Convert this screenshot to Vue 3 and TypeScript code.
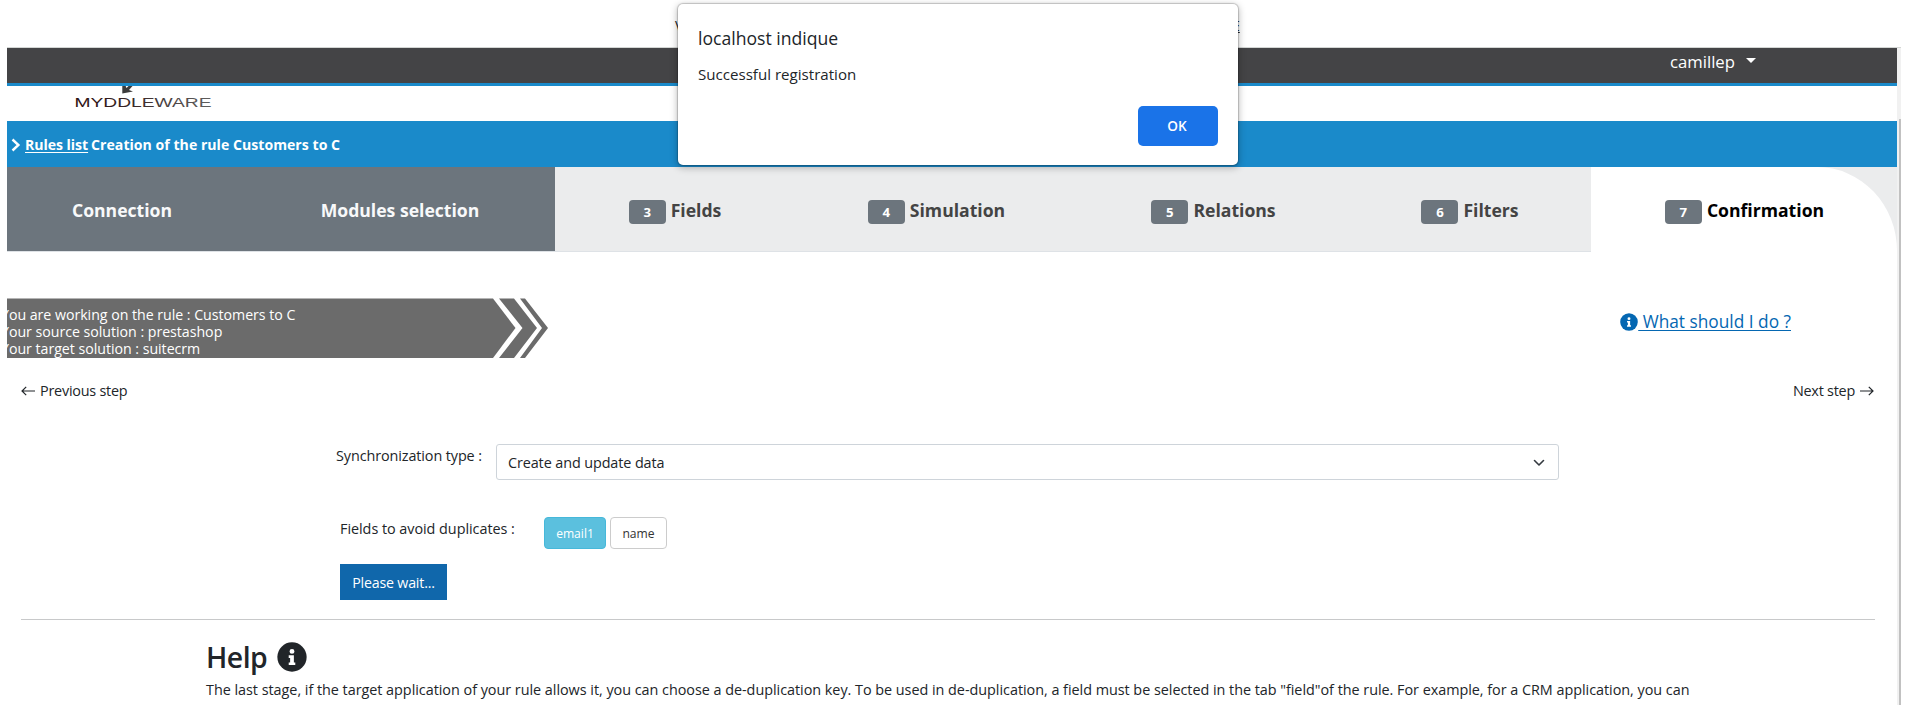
<script setup lang="ts">
import { ref } from 'vue'

interface Step {
  label: string
  state: 'done' | 'todo' | 'active'
  num?: number
}

const steps: Step[] = [
  { label: 'Connection', state: 'done' },
  { label: 'Modules selection', state: 'done' },
  { label: 'Fields', state: 'todo', num: 3 },
  { label: 'Simulation', state: 'todo', num: 4 },
  { label: 'Relations', state: 'todo', num: 5 },
  { label: 'Filters', state: 'todo', num: 6 },
  { label: 'Confirmation', state: 'active', num: 7 },
]

const duplicateFields = ref([
  { name: 'email1', selected: true },
  { name: 'name', selected: false },
])
</script>

<template>
  <div class="page">
    <div class="content">
      <header class="top-space"></header>
      <div class="userbar">
        <span class="user">camillep</span>
        <span class="caret"></span>
      </div>
      <div class="brand">
        <svg class="logo" width="140" height="35" viewBox="0 0 140 35">
          <defs>
            <linearGradient id="ink" x1="0" x2="1" y1="0" y2="0">
              <stop offset="0" stop-color="#2c0f12" />
              <stop offset="0.45" stop-color="#3b2a2a" />
              <stop offset="1" stop-color="#606060" />
            </linearGradient>
          </defs>
          <path d="M48.300 0V7.500L59 5.500L55 4L58.500 0H54.500L52.500 2L51.600 0Z" fill="#3c3c3c" />
          <text x="0.5" y="21.3" font-size="13.2" textLength="137" lengthAdjust="spacingAndGlyphs" fill="url(#ink)">MYDDLEWARE</text>
        </svg>
      </div>
      <nav class="crumbs">
        <svg width="10" height="14" viewBox="0 0 10 14"><path d="M1.500 1.500L7.400 7L1.500 12.500" fill="none" stroke="#fff" stroke-width="2.4" /></svg>
        <a>Rules list</a>
        <span>Creation of the rule Customers to C</span>
      </nav>
      <div class="steps">
        <div v-for="s in steps" :key="s.label" class="step" :class="s.state">
          <span v-if="s.num" class="num">{{ s.num }}</span>
          <span class="label">{{ s.label }}</span>
        </div>
      </div>

      <div class="info">
        <div class="ribbon">
          <svg class="ribbon-bg" width="542" height="60" viewBox="0 0 542 60">
            <g fill="#6b6b6b">
              <path d="M0 .5H486L508.500 30L486 60H0Z" />
              <path d="M492 .5H507L530 30L507 60H492L515.500 30Z" />
              <path d="M513 .5H518L541 30L518 60H513L535 30Z" />
            </g>
          </svg>
          <div class="ribbon-text">
            <div>You are working on the rule : Customers to C</div>
            <div>Your source solution : prestashop</div>
            <div>Your target solution : suitecrm</div>
          </div>
        </div>
        <a class="what">
          <svg width="18" height="18" viewBox="0 0 512 512">
            <circle cx="256" cy="256" r="250" fill="#0467b2" />
            <path fill="#fff" d="M256 118a42 42 0 1 1 0 84 42 42 0 0 1 0-84zM200 228h88v120h24v44H200v-44h24v-76h-24z" />
          </svg><span>&nbsp;What should I do ?</span>
        </a>
      </div>

      <div class="pager">
        <a>
          <svg width="14" height="10" viewBox="0 0 14 10"><path d="M14 5H1M5.200 .8L1 5L5.200 9.200" fill="none" stroke="#212529" stroke-width="1.2" /></svg>
          <span>Previous step</span>
        </a>
        <a>
          <span>Next step</span>
          <svg width="14" height="10" viewBox="0 0 14 10"><path d="M0 5H13M8.800 .8L13 5L8.800 9.200" fill="none" stroke="#212529" stroke-width="1.2" /></svg>
        </a>
      </div>

      <div class="sync">
        <label>Synchronization type :</label>
        <div class="select">
          <span>Create and update data</span>
          <svg width="12" height="8" viewBox="0 0 12 8"><path d="M1.500 1.500L6 6L10.500 1.500" fill="none" stroke="#343a40" stroke-width="1.600" stroke-linecap="round" stroke-linejoin="round" /></svg>
        </div>
      </div>

      <div class="dups">
        <label>Fields to avoid duplicates :</label>
        <button v-for="f in duplicateFields" :key="f.name" class="chip" :class="{ on: f.selected }" @click="f.selected = !f.selected">{{ f.name }}</button>
      </div>
      <button class="wait">Please wait...</button>

      <section class="help">
        <h2>
          <span>Help</span>
          <svg width="30" height="30" viewBox="0 0 512 512">
            <circle cx="256" cy="256" r="250" fill="#212529" />
            <path fill="#fff" d="M256 118a42 42 0 1 1 0 84 42 42 0 0 1 0-84zM200 228h88v120h24v44H200v-44h24v-76h-24z" />
          </svg>
        </h2>
        <p>The last stage, if the target application of your rule allows it, you can choose a de-duplication key. To be used in de-duplication, a field must be selected in the tab "field"of the rule. For example, for a CRM application, you can</p>
      </section>
    </div>

    <div class="scrollbar"><div class="thumb"></div></div>

    <span class="behind left">V</span>
    <span class="behind right">E</span>
    <div class="dialog" role="alertdialog">
      <div class="dialog-title">localhost indique</div>
      <div class="dialog-msg">Successful registration</div>
      <button class="ok">OK</button>
    </div>
  </div>
</template>

<style>
body {
  margin: 0;
  background: #fff;
}
</style>

<style scoped>
* {
  box-sizing: border-box;
}
.page {
  position: relative;
  width: 1905px;
  height: 705px;
  overflow: hidden;
  background: #fff;
  color: #212529;
  font: 14.4px/20px "Open Sans", "Noto Sans", sans-serif;
  white-space: nowrap;
}
button {
  font-family: inherit;
  padding: 0;
}
.content {
  width: 1890px;
  margin-left: 7px;
}
.top-space {
  height: 48px;
  border-bottom: 1px solid #d3d6d4;
}
.userbar {
  display: flex;
  height: 38px;
  padding-left: 1663px;
  background: #444446;
  border-bottom: 3px solid #1a8aca;
  color: #fff;
  font-size: 16.7px;
  line-height: 27px;
}
.caret {
  width: 0;
  height: 0;
  margin: 10px 0 0 11px;
  border: 5px solid transparent;
  border-top-color: #fff;
  border-bottom: 0;
}
.brand {
  height: 35px;
  padding-left: 67px;
}
.logo {
  display: block;
  font-family: "Liberation Sans", Arial, sans-serif;
}
.crumbs {
  display: flex;
  align-items: center;
  height: 46px;
  padding: 2px 0 0 4px;
  background: #1a8aca;
  color: #fff;
  font-size: 14.1px;
  font-weight: 700;
}
.crumbs a {
  margin: 0 3px 0 4px;
  text-decoration: underline;
  text-underline-offset: 2px;
  letter-spacing: -0.05px;
}
.crumbs span {
  letter-spacing: 0.02px;
}
.steps {
  display: grid;
  grid-template-columns: 240px 308px 239px 284px 270px 243px 306px;
  height: 85px;
  background: #ebeced;
}
.step {
  display: flex;
  justify-content: center;
  align-items: center;
  border-bottom: 1px solid #dee2e6;
  color: #444;
  font-size: 17.6px;
  font-weight: 700;
}
.step.done {
  padding-right: 2px;
}
.step:first-child {
  padding-right: 10px;
}
.label {
  padding-top: 2px;
}
.step.done {
  background: #6c757d;
  color: #f8f9fa;
}
.step.active {
  background: #fff;
  border-bottom-color: #fff;
  border-top-right-radius: 80px 84px;
  color: #000;
}
.num {
  width: 37px;
  height: 24px;
  margin: 6px 5px 0 1px;
  border-radius: 4px;
  background: #6c757d;
  color: #fff;
  font-size: 13.2px;
  line-height: 24px;
  text-align: center;
}
.info {
  display: flex;
  justify-content: space-between;
  height: 60px;
  margin-top: 46px;
}
.ribbon {
  position: relative;
  width: 542px;
  height: 60px;
  overflow: hidden;
}
.ribbon-bg {
  display: block;
}
.ribbon-text {
  position: absolute;
  top: 8px;
  left: -6px;
  color: #fff;
  font-size: 14.2px;
  line-height: 17px;
  letter-spacing: -0.03px;
}
.what {
  display: flex;
  height: 24px;
  margin: 12px 106px 0 0;
  color: #0467b2;
  font-size: 17.3px;
  line-height: 23px;
}
.what svg {
  margin: 3px 0 0 -1px;
}
.what span {
  text-decoration: underline;
  text-decoration-thickness: 1px;
  text-underline-offset: 2px;
}
.pager {
  display: flex;
  justify-content: space-between;
  margin: 23px 23px 0 14px;
  letter-spacing: -0.23px;
}
.pager a {
  display: flex;
  align-items: center;
  gap: 5px;
}
.sync {
  display: flex;
  height: 36px;
  margin: 43px 0 0 329px;
}
.sync label {
  width: 160px;
  padding-top: 2px;
  letter-spacing: -0.1px;
}
.select {
  display: flex;
  justify-content: space-between;
  align-items: center;
  width: 1063px;
  padding: 1px 13px 0 11px;
  border: 1px solid #ced4da;
  border-radius: 3px;
  letter-spacing: -0.1px;
}
.dups {
  display: flex;
  gap: 4px;
  height: 32px;
  margin: 37px 0 0 333px;
}
.dups label {
  width: 200px;
  padding-top: 2px;
  letter-spacing: -0.04px;
}
.chip {
  width: 57px;
  height: 32px;
  border: 1px solid #ccc;
  border-radius: 4px;
  background: #fff;
  color: #333;
  font-size: 12.1px;
}
.chip.on {
  width: 62px;
  border-color: #46b8da;
  background: #5bc0de;
  color: #fff;
}
.wait {
  display: block;
  width: 107px;
  height: 36px;
  margin: 15px 0 0 333px;
  border: 0;
  background: #1067ab;
  color: #fff;
  font-size: 14.2px;
  letter-spacing: -0.18px;
}
.help {
  margin: 19px 22px 0 14px;
  padding-left: 185px;
  border-top: 1px solid #c8c9ca;
}
h2 {
  display: flex;
  align-items: center;
  gap: 10px;
  height: 36px;
  margin: 19px 0 0;
  font-size: 28.4px;
  font-weight: 600;
  letter-spacing: -0.5px;
  line-height: 36px;
}
p {
  margin: 5px 0 0;
  letter-spacing: -0.03px;
}
.scrollbar {
  position: absolute;
  top: 47px;
  left: 1897px;
  width: 4px;
  height: 658px;
  padding: 71px 0 0 2px;
  border-top: 1px solid #d3d6d4;
  background: #f1f1f1;
}
.thumb {
  height: 590px;
  background: #c1c1c1;
}
.behind {
  position: absolute;
  top: 16px;
  font-size: 14px;
}
.behind.left {
  left: 675px;
}
.behind.right {
  left: 1232px;
  text-decoration: underline;
}
.dialog {
  position: absolute;
  top: 4px;
  left: 678px;
  width: 560px;
  height: 161px;
  padding: 22px 20px 19px 20px;
  border-radius: 5px;
  background: #fff;
  box-shadow: 0 0 1px 1px rgba(0, 0, 0, 0.18), 0 2px 7px 1px rgba(0, 0, 0, 0.26);
}
.dialog-title {
  height: 24px;
  font-size: 17.6px;
  line-height: 24px;
}
.dialog-msg {
  height: 20px;
  margin-top: 14px;
  font-size: 15.1px;
  line-height: 20px;
}
.ok {
  display: block;
  width: 80px;
  height: 40px;
  margin: 22px 0 0 auto;
  padding: 0 2px 1px 0;
  border: 0;
  border-radius: 5px;
  background: #1a73e8;
  color: #fff;
  font-size: 13.6px;
  font-weight: 600;
}
</style>
